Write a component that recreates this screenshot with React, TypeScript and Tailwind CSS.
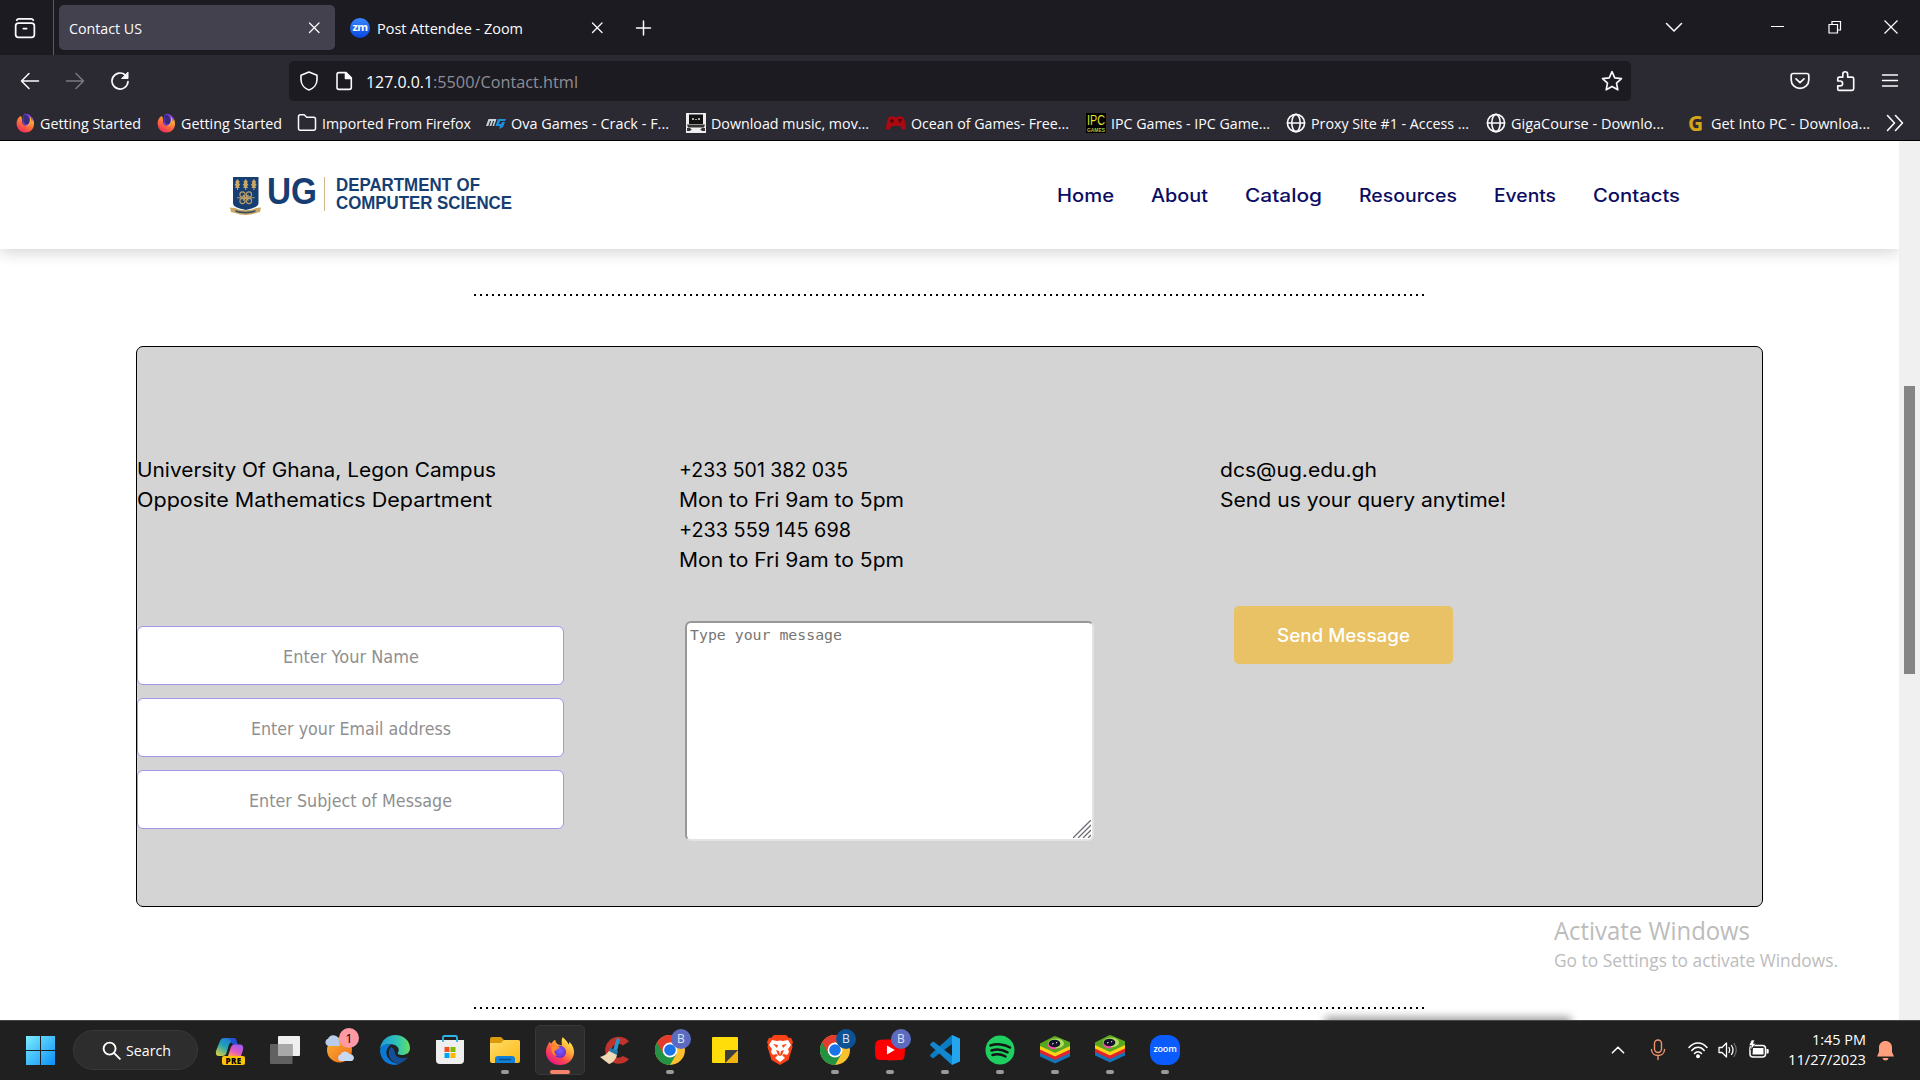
import React, { useLayoutEffect, useRef, useState } from "react";
import { FaYoutube } from "react-icons/fa";

const segoe = "font-['Open_Sans','Noto_Sans',sans-serif]";
const poppins = "font-['Inter','Open_Sans',sans-serif]";

/** A single line of text whose glyphs are condensed or widened so that it spans `w` pixels. */
function Line({ w, className = "", children }: { w: number; className?: string; children: string }) {
  const ref = useRef<HTMLSpanElement>(null);
  const [scale, setScale] = useState(1);
  useLayoutEffect(() => {
    if (ref.current) setScale(w / ref.current.getBoundingClientRect().width);
  }, []);
  return (
    <span className={"block shrink-0 whitespace-pre " + className} style={{ width: w }}>
      <span ref={ref} className="block w-fit origin-left" style={{ transform: `scaleX(${scale})` }}>
        {children}
      </span>
    </span>
  );
}

function Stroke({ size, children, className = "", sw = 1.5 }: { size: number; children: React.ReactNode; className?: string; sw?: number }) {
  return (
    <svg width={size} height={size} viewBox="0 0 20 20" fill="none" stroke="currentColor" strokeWidth={sw} strokeLinecap="round" strokeLinejoin="round" className={"shrink-0 " + className}>
      {children}
    </svg>
  );
}

const CloseX = () => (
  <Stroke size={20} sw={1.3}>
    <path d="M5.500 5l9.500 9.500M15 5L5.500 14.500" />
  </Stroke>
);

const Globe = () => (
  <Stroke size={20} sw={1.6}>
    <circle cx="10" cy="10" r="8.6" />
    <ellipse cx="10" cy="10" rx="4.2" ry="8.6" />
    <path d="M1.5 10h17" />
  </Stroke>
);

function FirefoxLogo({ size }: { size: number }) {
  return (
    <svg width={size} height={size} viewBox="0 0 32 32" className="shrink-0">
      <defs>
        <linearGradient id="ffBody" x1="0.85" y1="0.1" x2="0.2" y2="0.95">
          <stop offset="0" stopColor="#fff44f" />
          <stop offset="0.35" stopColor="#ffa436" />
          <stop offset="0.65" stopColor="#ff4a4d" />
          <stop offset="1" stopColor="#e31587" />
        </linearGradient>
        <radialGradient id="ffCore" cx="0.5" cy="0.4" r="0.6">
          <stop offset="0" stopColor="#7a5cff" />
          <stop offset="1" stopColor="#6a2bc9" />
        </radialGradient>
      </defs>
      <path d="M19 1c2 3 5 4 6 8 1-1 1-2 1-3 3 3 5 7 5 11 0 8-7 14-15 14S1 25 1 17c0-4 1-6 3-9V6l3 2c1-2 2-3 4-4 0 2 1 4 3 5l4 1c0-3-1-6 1-9z" fill="url(#ffBody)" />
      <circle cx="16" cy="17" r="6.5" fill="url(#ffCore)" />
      <path d="M7 12c4-3 8-1 9 1-3 0-3 2-6 3 0 2 1 4 3 5-5 0-7-5-6-9z" fill="#ff8a2a" />
    </svg>
  );
}

const FirefoxMini = () => (
  <svg width="19" height="20" viewBox="0 0 19 20" className="shrink-0">
    <defs>
      <linearGradient id="fm" x1="0.8" y1="0" x2="0.2" y2="1">
        <stop offset="0" stopColor="#ffd23f" />
        <stop offset="0.5" stopColor="#ff7139" />
        <stop offset="1" stopColor="#f0245e" />
      </linearGradient>
    </defs>
    <path d="M5 3C1 5 0 9 1 13c1 4 4 6.500 8.500 6.500S18 16 18 11c0-3-1-6-3-7 1 3 0 7-2 8-3 2-7 0-7-4 0-2 0-3-1-5z" fill="url(#fm)" />
    <path d="M8 1c5-1 9 3 9 7-1-1-1-1-1.500-3C16 9 14 13 10.500 13 7 13 5 9 8 1z" fill="#7b3fe0" />
    <path d="M8 1.500c3 0 5 2 5.500 5 .4 3-1 5-3 5C8 11.500 6.500 8 8 1.500z" fill="#3a2c7a" />
    <path d="M13.500 3c2 2 2.500 5 1.500 7-1.500 3-4 3.500-6 3 4-.5 6-4.500 4.500-10z" fill="#ffb238" />
  </svg>
);

type Bookmark = { icon: React.ReactNode; text: string; w: number; cell: string };

const bookmarks: Bookmark[] = [
  { icon: <FirefoxMini />, text: "Getting Started", w: 101, cell: "w-[141px]" },
  { icon: <FirefoxMini />, text: "Getting Started", w: 101, cell: "w-[141px]" },
  {
    icon: (
      <Stroke size={20}>
        <path d="M1.500 15.500v-12q0-1.700 1.700-1.700h4l2.500 2.500h7q1.800 0 1.800 1.800v9.400q0 1.700-1.800 1.700H3.200q-1.700 0-1.700-1.700z" />
      </Stroke>
    ),
    text: "Imported From Firefox",
    w: 149,
    cell: "w-[189px]",
  },
  {
    icon: (
      <svg width="20" height="20" viewBox="0 0 20 20" className="shrink-0">
        <path d="M2.500 6h8l-2.500 7H6.500l1.700-5H7l-1.700 5H3.500l1.700-5H4L2.300 13H0z" fill="#c9d3da" />
        <path d="M12 6h8l-1 2h-5l-1 3h2l1-2h3l-2 5-4 2 1-3H9.500z" fill="#1f8fdd" />
      </svg>
    ),
    text: "Ova Games - Crack - F...",
    w: 158,
    cell: "w-[200px]",
  },
  {
    icon: (
      <svg width="20" height="20" viewBox="0 0 20 20" className="shrink-0">
        <path d="M0 0h20v20H0z" fill="#eee" />
        <path d="M3 1.500h14V11H3z" fill="#111" />
        <path d="M6 5h2v2H6zM9 6h2v1H9zM12 5h2v2h-2z" fill="#aaa" />
        <path d="M1 11.500h18l-1 3H2zM1 15h3l2 2h8l2-2h3v3h-3l-1-1H5l-1 1H1z" fill="#333" />
      </svg>
    ),
    text: "Download music, mov...",
    w: 158,
    cell: "w-[200px]",
  },
  {
    icon: (
      <svg width="20" height="20" viewBox="0 0 20 20" className="shrink-0">
        <path d="M3 4l4-1 1 1h4l1-1 4 1c2 3 3 8 3 12l-3 1-3-4H6l-3 4-3-1C0 12 1 7 3 4z" fill="#a90911" />
        <path d="M4 8h4M6 6v4M12 7h4M14 6v4" stroke="#4d0508" strokeWidth="1.3" />
      </svg>
    ),
    text: "Ocean of Games- Free...",
    w: 158,
    cell: "w-[200px]",
  },
  {
    icon: (
      <span className="flex h-5 w-5 shrink-0 flex-col items-center bg-black font-['Liberation_Sans',sans-serif] text-[#e2e02c]">
        <Line w={18} className="text-[15px] leading-[14px]">IPC</Line>
        <Line w={18} className="text-[6px] leading-[6px] font-bold text-[#b4c53a]">GAMES</Line>
      </span>
    ),
    text: "IPC Games - IPC Game...",
    w: 159,
    cell: "w-[200px]",
  },
  { icon: <Globe />, text: "Proxy Site #1 - Access ...", w: 158, cell: "w-[200px]" },
  { icon: <Globe />, text: "GigaCourse - Downlo...", w: 153, cell: "w-[200px]" },
  {
    icon: <span className="w-5 shrink-0 pr-px text-center font-['Open_Sans',sans-serif] text-[21px] leading-5 font-bold text-[#d6a419]">G</span>,
    text: "Get Into PC - Downloa...",
    w: 159,
    cell: "w-[199px]",
  },
];

function TabStrip() {
  return (
    <div className="flex h-[55px] items-center bg-[#1c1b22]">
      <div className="flex h-full w-[54px] items-center border-r border-[#5b5a63] pl-[14px]">
        <Stroke size={22} sw={1.6}>
          <rect x="1.500" y="5.500" width="17" height="13" rx="2.500" />
          <path d="M2.500 2.800q.5-1.200 1.800-1.200h11.400q1.300 0 1.800 1.200M8.500 10.500h3" />
        </Stroke>
      </div>
      <div className="ml-[5px] flex h-[45px] w-[276px] items-center justify-between rounded-[5px] bg-[#42414d] pr-[11px] pl-[10px]">
        <Line w={73} className="pt-px text-[15px]">Contact US</Line>
        <CloseX />
      </div>
      <div className="ml-[15px] flex w-[257px] items-center">
        <span className="flex h-5 w-5 items-center justify-center rounded-full bg-gradient-to-b from-[#3a86ff] to-[#0b46e0] text-[11px] leading-none font-bold tracking-[-0.5px]">
          <span className="-mt-[2px]">zm</span>
        </span>
        <Line w={146} className="ml-[7px] pt-px text-[15px]">Post Attendee - Zoom</Line>
        <span className="ml-auto">
          <CloseX />
        </span>
      </div>
      <Stroke size={20} className="ml-[26px]" sw={1.5}>
        <path d="M10.500 3v14M3.500 10h14" />
      </Stroke>
      <Stroke size={20} className="-mt-[2px] ml-auto" sw={1.5}>
        <path d="M2.500 6.500L10 14l7.500-7.500" />
      </Stroke>
      <svg width="14" height="14" className="-mt-px ml-[87px]">
        <path d="M0 6.500h13" stroke="white" />
      </svg>
      <svg width="14" height="14" viewBox="0 0 14 14" className="-mt-px ml-[43px]" fill="none" stroke="white" strokeWidth="1.200">
        <path d="M1 4.500h8.500v8.500H1zM4 4.500V1.500h8.500V10h-3" />
      </svg>
      <svg width="16" height="16" className="-mt-px mr-[21px] ml-[41px]" stroke="white" strokeWidth="1.200">
        <path d="M1.500 1.500l13 13M14.500 1.500l-13 13" />
      </svg>
    </div>
  );
}

function NavBar() {
  return (
    <div className="flex h-[51px] items-center">
      <Stroke size={20} className="ml-5">
        <path d="M18.500 10H1.500M9 2.500L1.500 10 9 17.500" />
      </Stroke>
      <Stroke size={20} className="ml-[25px] text-[#7a7982]">
        <path d="M1.500 10h17M11 2.500l7.500 7.500-7.500 7.500" />
      </Stroke>
      <Stroke size={20} className="ml-[25px]" sw={1.7}>
        <path d="M15.500 4.200A8 8 0 1 0 18 10.500" />
        <path d="M18 1.500v6h-6z" fill="currentColor" strokeWidth="1" />
      </Stroke>
      <div className="ml-[159px] flex h-10 w-[1342px] items-center rounded-[5px] bg-[#1c1b22]">
        <Stroke size={20} className="ml-[10px]" sw={1.6}>
          <path d="M10 1l8 3.200v4.300c0 5-3.500 9-8 10.500-4.500-1.500-8-5.500-8-10.500V4.200z" />
        </Stroke>
        <Stroke size={20} className="ml-[15px]" sw={1.6}>
          <path d="M3 3.500q0-1.900 1.900-1.900H12l5.300 5.300v9.600q0 1.900-1.900 1.900H4.900q-1.900 0-1.900-1.900z" />
          <path d="M11.500 2v5.500H17z" fill="currentColor" />
        </Stroke>
        <span className="ml-[12px] flex pt-[3px] text-[17px] text-[#8f8e96]">
          <Line w={67} className="text-[#fbfbfe]">127.0.0.1</Line>
          <Line w={145}>:5500/Contact.html</Line>
        </span>
        <Stroke size={22} className="mr-2 ml-auto" sw={1.5}>
          <path d="M10 1.500l2.500 5.600 6.100.7-4.500 4.100 1.200 6.100L10 15l-5.300 3 1.200-6.100L1.400 7.800l6.100-.7z" />
        </Stroke>
      </div>
      <Stroke size={20} className="ml-[159px]" sw={1.7}>
        <path d="M3.200 2.500h13.600q2 0 2 2V9a8.800 8.300 0 0 1-17.600 0V4.500q0-2 2-2zM6 7.800l4 3.900 4-3.900" />
      </Stroke>
      <Stroke size={22} className="ml-[25px]" sw={1.5}>
        <path d="M3.800 18.500h11.700q1.500 0 1.500-1.500V8q0-1.500-1.500-1.500h-4V3.800a2.200 2.200 0 0 0-4.400 0v2.700H4Q2.500 6.500 2.500 8v2h2.200a2.200 2.200 0 0 1 0 4.400H2.500v2.800q0 1.300 1.300 1.300z" />
      </Stroke>
      <Stroke size={20} className="ml-[23px]" sw={1.4}>
        <path d="M2.500 4h15M2.500 9.500h15M2.500 15h15" />
      </Stroke>
    </div>
  );
}

function BookmarkBar() {
  return (
    <div className="flex h-[34px] items-center pl-[15px] text-[14.5px]">
      {bookmarks.map((b, i) => (
        <div key={i} className={"flex shrink-0 items-center gap-[5px] " + b.cell}>
          <span className="flex w-5 shrink-0 justify-center">{b.icon}</span>
          <Line w={b.w} className="pt-[2px]">{b.text}</Line>
        </div>
      ))}
      <Stroke size={20} sw={1.6}>
        <path d="M2.500 2.500L9.500 10l-7 7.500M10.500 2.500l7 7.500-7 7.500" />
      </Stroke>
    </div>
  );
}

function Logo() {
  return (
    <div className="flex items-start">
      <svg width="31" height="38" viewBox="0 0 31 38" className="mt-px">
        <path d="M3 0h25.500v26c0 4-5 5-12.700 7C8 31 3 30 3 26z" fill="#163e72" />
        <g fill="#c9a866">
          <path d="M7.500 2l2.300 3-1 1 1.500 2-1.500 1 1 2H8v2H7v-2H5l1-2-1.500-1L6 6 5.200 5zM15.700 2L18 5l-1 1 1.500 2-1.500 1 1 2h-1.800v2h-1v-2h-2l1-2-1.500-1 1.500-2-.8-1zM23.900 2l2.300 3-1 1 1.500 2-1.500 1 1 2h-1.800v2h-1v-2h-2l1-2-1.500-1 1.500-2-.8-1z" />
        </g>
        <g fill="none" stroke="#b9a06a" strokeWidth="1.100">
          <circle cx="12.500" cy="17.500" r="2.600" />
          <circle cx="19" cy="17.500" r="2.600" />
          <circle cx="12.500" cy="24" r="2.600" />
          <circle cx="19" cy="24" r="2.600" />
          <path d="M7 20.800h17.500M13 18l5.500 5.500M18.500 18L13 23.500" />
        </g>
        <path d="M0 30.500l5 .5c6 3 15 3 21 0l5-.5-1 4.500-4 1c-6 2.600-15 2.600-21 0l-4-1z" fill="#c9a866" />
        <path d="M5.500 33c6 2.300 14 2.300 20 0v1.800c-6 2.300-14 2.300-20 0z" fill="#3a4d63" />
      </svg>
      <Line w={50} className="ml-[6px] pt-[3px] font-['Liberation_Sans',sans-serif] text-[36px] leading-[26px] font-bold text-[#163e72]">UG</Line>
      <span className="mt-px ml-[7px] h-[34px] w-px bg-[#cdb88a]" />
      <div className="ml-[11px] flex flex-col font-['Liberation_Sans',sans-serif] text-[19px] leading-[18px] font-bold text-[#163e72]">
        <Line w={144}>DEPARTMENT OF</Line>
        <Line w={176}>COMPUTER SCIENCE</Line>
      </div>
    </div>
  );
}

function SiteHeader() {
  return (
    <header className="relative flex h-[108px] shrink-0 justify-between bg-white pr-[219px] pl-[230px] shadow-[0_4px_14px_rgba(0,0,0,0.16)]">
      <div className="pt-[35px]">
        <Logo />
      </div>
      <nav className={"flex gap-[37px] pt-[41px] text-[18px] leading-[28px] font-medium text-[#0c0c63] " + poppins}>
        <Line w={57}>Home</Line>
        <Line w={57}>About</Line>
        <Line w={77}>Catalog</Line>
        <Line w={98}>Resources</Line>
        <Line w={62}>Events</Line>
        <Line w={87}>Contacts</Line>
      </nav>
    </header>
  );
}

const Dots = () => (
  <div className="h-[2px] w-[952px] shrink-0 bg-[repeating-linear-gradient(90deg,#000_0,#000_2px,transparent_2px,transparent_6px)]" />
);

function Field({ text, w }: { text: string; w: number }) {
  return (
    <div className="flex h-[59px] w-[427px] items-center justify-center rounded-[6px] border border-[#a495ec] bg-white pt-[3px] font-['DejaVu_Sans','Noto_Sans',sans-serif] text-[17px] text-[#8f8f8f]">
      <Line w={w}>{text}</Line>
    </div>
  );
}

function ContactCard() {
  return (
    <section className={"grid h-[561px] w-[1627px] shrink-0 grid-cols-[542px_541px_1fr] rounded-[7px] border border-black bg-[#d4d4d4] text-[19.5px] leading-[30px] text-black " + poppins}>
      <div className="flex flex-col pt-[108px]">
        <Line w={359}>University Of Ghana, Legon Campus</Line>
        <Line w={355}>Opposite Mathematics Department</Line>
        <div className="mt-[111px] flex flex-col gap-[13px]">
          <Field text="Enter Your Name" w={136} />
          <Field text="Enter your Email address" w={200} />
          <Field text="Enter Subject of Message" w={203} />
        </div>
      </div>
      <div className="flex flex-col pt-[108px]">
        <Line w={169}>+233 501 382 035</Line>
        <Line w={225}>Mon to Fri 9am to 5pm</Line>
        <Line w={172}>+233 559 145 698</Line>
        <Line w={225}>Mon to Fri 9am to 5pm</Line>
        <div className="mt-[46px] ml-[6px] flex h-[220px] w-[409px] flex-col justify-between rounded-[6px] border-2 border-t-[#979797] border-r-[#e3e3e3] border-b-[#e3e3e3] border-l-[#979797] bg-white">
          <Line w={152} className="ml-[3px] pt-[4px] font-['DejaVu_Sans_Mono',monospace] text-[13.3px] leading-[18px] text-[#757575]">
            Type your message
          </Line>
          <svg width="18" height="18" className="mr-px mb-px self-end" stroke="#6b6b76" strokeWidth="1.300">
            <path d="M0 18L18 0M5 18L18 5M10 18l8-8M15 18l3-3" />
          </svg>
        </div>
      </div>
      <div className="flex flex-col pt-[108px]">
        <Line w={157}>dcs@ug.edu.gh</Line>
        <Line w={286}>Send us your query anytime!</Line>
        <div className="mt-[91px] ml-[14px] flex h-[58px] w-[219px] items-center justify-center rounded-[5px] bg-[#e8c264] pt-[2px] text-[18px] font-medium text-white">
          <Line w={133}>Send Message</Line>
        </div>
      </div>
    </section>
  );
}

function ChromeLogo() {
  return (
    <svg width="30" height="30" viewBox="0 0 30 30">
      <circle cx="15" cy="15" r="15" fill="#fbc02d" />
      <path d="M2 7.500A15 15 0 0 0 15 30l6.500-11.300L15 15z" fill="#229342" />
      <path d="M2 7.500A15 15 0 0 1 28 7.500H15L8.500 18.700z" fill="#e33b2e" />
      <circle cx="15" cy="15" r="7.400" fill="#fff" />
      <circle cx="15" cy="15" r="5.800" fill="#1a73e8" />
    </svg>
  );
}

function BlueStacks() {
  return (
    <svg width="30" height="30" viewBox="0 0 30 30">
      <path d="M0 17l15-4 15 4v4.500L16 28q-1 .5-2 0L0 21.500z" fill="#1573b8" />
      <path d="M0 14l15-4 15 4v4l-14 6.500q-1 .5-2 0L0 18z" fill="#e3222a" />
      <path d="M0 10l15-4 15 4v4.500L16 21q-1 .5-2 0L0 14.500z" fill="#fbd318" />
      <path d="M0 8.500L14 1.300q1-.5 2 0l14 6v3.700l-14 6.500q-1 .5-2 0L0 11z" fill="#57a81f" />
      <ellipse cx="16" cy="8.500" rx="8" ry="5" fill="#b4dd5f" />
      <path d="M7.500 9c0 4 5 6 9 5l-2-4z" fill="#ff4fa8" />
      <ellipse cx="14.500" cy="8.500" rx="5.800" ry="3.800" fill="#12132b" />
      <path d="M12 9l1.500-.5M16 8l1.200-.6" stroke="#fff" strokeWidth="1" />
    </svg>
  );
}

function Badge({ color }: { color: string }) {
  return (
    <span className={"absolute -top-[6px] -right-[6px] flex h-5 w-5 items-center justify-center rounded-full text-[12px] leading-none text-[#dfe3f5] " + color}>B</span>
  );
}

type Task = { icon: React.ReactNode; run?: boolean; active?: boolean };

const tasks: Task[] = [
  {
    icon: (
      <span className="relative block h-[30px] w-[30px]">
        <svg width="30" height="30" viewBox="0 0 30 30">
          <defs>
            <linearGradient id="cpA" x1="0.8" y1="0" x2="0.1" y2="1">
              <stop offset="0" stopColor="#1f6fe0" />
              <stop offset="0.5" stopColor="#21a3b5" />
              <stop offset="1" stopColor="#e0d23c" />
            </linearGradient>
            <linearGradient id="cpB" x1="0.8" y1="0" x2="0.2" y2="1">
              <stop offset="0" stopColor="#9b5cf6" />
              <stop offset="0.6" stopColor="#e25ac0" />
              <stop offset="1" stopColor="#ff9a5c" />
            </linearGradient>
          </defs>
          <path d="M9 3h9q3 0 3.500 3l-4 1q-3 0-4 4l-2 7q-1 3-4 3H4q-4 0-3-5L5 6q1-3 4-3z" fill="url(#cpA)" />
          <path d="M12 3h6q3 0 3.500 3L23 10h-3q-4-1-4-4-1-3-4-3z" fill="#2450d8" />
          <path d="M19 9.500h6q4 0 3 5.500l-2 6H13l3-9q1-2.500 3-2.500z" fill="url(#cpB)" />
        </svg>
        <span className="absolute top-[21px] left-[7px] flex h-[9px] w-[23px] items-center justify-center rounded-[2px] bg-[#fcc50a] text-[8px] leading-none font-extrabold tracking-[0.3px] text-black">PRE</span>
      </span>
    ),
  },
  {
    icon: (
      <svg width="30" height="30" viewBox="0 0 30 30">
        <rect x="8" y="1" width="22" height="20" rx="1" fill="#efefef" />
        <rect x="0" y="9" width="22.500" height="20" rx="1" fill="#6d6d6d" opacity="0.85" />
        <rect x="8" y="9" width="14.500" height="12" fill="#a9a9a9" />
      </svg>
    ),
  },
  {
    icon: (
      <span className="relative block h-[30px] w-[30px]">
        <svg width="30" height="30" viewBox="0 0 30 30">
          <defs>
            <linearGradient id="sun" x1="0" y1="0" x2="1" y2="1">
              <stop offset="0" stopColor="#f9b233" />
              <stop offset="1" stopColor="#ee6c1a" />
            </linearGradient>
          </defs>
          <circle cx="14.500" cy="15" r="12.500" fill="url(#sun)" />
          <path d="M3.500 11a3.800 3.800 0 0 1-.5-7.300 6 6 0 0 1 10.500-.7l1.500 8z" fill="#b9cdea" />
          <path d="M15 26a3.500 3.500 0 0 1 .5-6.500 5 5 0 0 1 9-.5c4.500 0 6 5 2.500 7z" fill="#c7d8f2" />
        </svg>
        <span className="absolute -top-[7px] left-[14px] flex h-5 w-5 items-center justify-center rounded-full bg-[#ff99a4] text-[13px] leading-none text-black">1</span>
      </span>
    ),
  },
  {
    icon: (
      <svg width="30" height="30" viewBox="0 0 30 30">
        <defs>
          <linearGradient id="edA" x1="0" y1="0.3" x2="1" y2="0.3">
            <stop offset="0" stopColor="#1f9ad6" />
            <stop offset="0.6" stopColor="#30c5b4" />
            <stop offset="1" stopColor="#67de5d" />
          </linearGradient>
        </defs>
        <path d="M0 14C1 5 8 0 15 0c9 0 15 6 15 13 0 5-4 7-8 7-3 0-5-1-4-2.500 2-3 0-7-5-8-6-1-11 1-13 4.500z" fill="url(#edA)" />
        <path d="M0 15C1 10 7 8.500 11 9.500c-6 4-6 11-1 15.500 3 3 8 4 11 3.500C10 33 0 26 0 15z" fill="#0a78d4" />
        <path d="M11 12c-4 4-3 13 5 16 5 1 9-2 12-6-5 2.500-12 1-13-4-1-3 0-4-4-6z" fill="#144e96" />
      </svg>
    ),
  },
  {
    icon: (
      <svg width="30" height="30" viewBox="0 0 30 30">
        <path d="M8 8V2.500Q8 1 9.500 1h11Q22 1 22 2.500V8" fill="none" stroke="#2fb4ea" strokeWidth="1.800" />
        <path d="M1 5h28v20q0 4-4 4H5q-4 0-4-4z" fill="#efefef" />
        <path d="M9.500 12h5v5h-5z" fill="#f25022" />
        <path d="M15.500 12h5v5h-5z" fill="#7fba00" />
        <path d="M9.500 18h5v5h-5z" fill="#00a4ef" />
        <path d="M15.500 18h5v5h-5z" fill="#ffb900" />
        <path d="M8 5v2M22 5v2" stroke="#2fb4ea" strokeWidth="1.800" />
      </svg>
    ),
  },
  {
    run: true,
    icon: (
      <svg width="30" height="30" viewBox="0 0 30 30">
        <defs>
          <linearGradient id="fold" x1="0" y1="0" x2="1" y2="1">
            <stop offset="0" stopColor="#ffdc6b" />
            <stop offset="1" stopColor="#fdb913" />
          </linearGradient>
        </defs>
        <path d="M0 4q0-2 2-2h9l3 3h14q2 0 2 2v3H0z" fill="#d99a0c" />
        <path d="M0 8h11l3-3h14q2 0 2 2v19q0 2-2 2H2q-2 0-2-2z" fill="url(#fold)" />
        <path d="M5 28v-4q0-3 3-3h14q3 0 3 3v4z" fill="#1180d6" />
        <path d="M9 24.500h12" stroke="#0a4f8c" strokeWidth="1.500" />
      </svg>
    ),
  },
  { active: true, icon: <FirefoxLogo size={30} /> },
  {
    icon: (
      <svg width="30" height="30" viewBox="0 0 30 30">
        <path d="M29 6.500l-6 4A7 7 0 1 0 23 21l6 3A13.500 13.500 0 1 1 29 6.500z" fill="#c0322c" />
        <path d="M17 3l3 1-3 12-4-1z" fill="#2a93cf" />
        <path d="M10 13l8 3-1 4-8-3z" fill="#2378ad" />
        <path d="M9 16l8 4c-1 4-4 8-8 9L0 22c4-1 7-3 9-6z" fill="#f0d9b5" />
      </svg>
    ),
  },
  {
    run: true,
    icon: (
      <span className="relative block">
        <ChromeLogo />
        <Badge color="bg-[#5c6bc0]" />
      </span>
    ),
  },
  {
    icon: (
      <svg width="26" height="26" viewBox="0 0 26 26">
        <path d="M1 0h24q1 0 1 1v12L13 26H1q-1 0-1-1V1q0-1 1-1z" fill="#ffdd0a" />
        <path d="M26 13v12q0 1-1 1H13z" fill="#f2b211" />
        <path d="M13 14q0-1 1-1h12L13 26z" fill="#3d3d3d" />
      </svg>
    ),
  },
  {
    icon: (
      <svg width="26" height="30" viewBox="0 0 26 30">
        <path d="M7 0h12l3 3 2-.3L26 7l-1 3 .5 2-4 13-8.500 5-8.500-5-4-13L1 10 0 7l2-4.300L4 3z" fill="#fb4318" />
        <path d="M5 5l5 1 3-.5 3 .5 5-1 3 5-3 4 1 3-2 3-3-1-2 1 3 3-5 4-5-4 3-3-2-1-3 1-2-3 1-3-3-4z" fill="#fff" />
        <path d="M6 9l5 1-1 3zM20 9l-5 1 1 3zM9 15l3 1 1 4 1-4 3-1-2 5-2 1-2-1z" fill="#fb4318" />
      </svg>
    ),
  },
  {
    run: true,
    icon: (
      <span className="relative block">
        <ChromeLogo />
        <Badge color="bg-[#0b5394]" />
      </span>
    ),
  },
  {
    run: true,
    icon: (
      <span className="relative flex h-[30px] w-[30px] items-center justify-center">
        <span className="h-3 w-3 bg-white" />
        <FaYoutube className="absolute -left-px h-[28px] w-8 text-[#ff0000]" />
        <Badge color="bg-[#5c6bc0]" />
      </span>
    ),
  },
  {
    run: true,
    icon: (
      <svg width="30" height="30" viewBox="0 0 30 30">
        <path d="M22 0L1 19l-1 2 3 2.500L22 9z" fill="#0b7bc4" />
        <path d="M22 30L0 10l1-2 2.500-1.500L22 21z" fill="#1287d0" />
        <path d="M22 0l8 3.500v23L22 30z" fill="#26a5ef" />
      </svg>
    ),
  },
  {
    run: true,
    icon: (
      <svg width="30" height="30" viewBox="0 0 30 30">
        <circle cx="15" cy="15" r="14.500" fill="#1ed05f" />
        <path d="M5.500 10.500c6-2 14-1.500 19.500 2M6.500 15.500c5-1.500 11-1 16 1.800M7.500 20c4-1.200 9-.8 13 1.500" fill="none" stroke="#151515" strokeWidth="2.500" strokeLinecap="round" />
      </svg>
    ),
  },
  { run: true, icon: <BlueStacks /> },
  {
    run: true,
    icon: (
      <span className="-mt-[3px] block">
        <BlueStacks />
      </span>
    ),
  },
  {
    run: true,
    icon: <span className="flex h-[30px] w-[30px] items-center justify-center rounded-[12px] bg-[#0b5cff] pb-[3px] text-[9px] leading-none font-semibold tracking-[-0.2px] text-white">zoom</span>,
  },
];

function TaskBar() {
  return (
    <footer className="flex h-[60px] items-center border-t border-[#474747] bg-[#202020] pb-px text-white">
      <svg width="29" height="29" viewBox="0 0 29 29" className="ml-[26px]">
        <defs>
          <linearGradient id="win" gradientUnits="userSpaceOnUse" x1="0" y1="0" x2="29" y2="29">
            <stop offset="0" stopColor="#7bedff" />
            <stop offset="1" stopColor="#0b8ff7" />
          </linearGradient>
        </defs>
        <path d="M0 0h14v14H0zM15 0h14v14H15zM0 15h14v14H0zM15 15h14v14H15z" fill="url(#win)" />
      </svg>
      <div className="ml-[18px] flex h-10 w-[125px] items-center rounded-full border border-[#383838] bg-[#2d2d2d]">
        <Stroke size={19} sw={2} className="ml-7">
          <circle cx="8" cy="8" r="6.300" />
          <path d="M12.800 12.800l6 6" />
        </Stroke>
        <Line w={45} className="ml-[5px] pt-[2px] text-[14.5px]">Search</Line>
      </div>
      <div className="ml-[4.500px] flex">
        {tasks.map((t, i) => (
          <div key={i} className="flex h-[58px] w-[55px] items-center justify-center">
            <div className={"flex h-[50px] w-[50px] flex-col items-center rounded-[5px] pt-[10px] " + (t.active ? "border border-[#383838] bg-[#2c2c2c]" : "")}>
              <span className="flex h-[30px] items-center justify-center">{t.icon}</span>
              {t.active && <span className="mt-[4px] h-[4px] w-5 shrink-0 rounded-full bg-[#f6836a]" />}
              {t.run && <span className="mt-[5px] h-[4px] w-2 shrink-0 rounded-full bg-[#9a9a9a]" />}
            </div>
          </div>
        ))}
      </div>
      <Stroke size={16} className="ml-auto" sw={2}>
        <path d="M3 13.500L10 6.500l7 7" />
      </Stroke>
      <svg width="18" height="22" viewBox="0 0 18 22" className="ml-[23px]" fill="none" stroke="#ef9470" strokeWidth="1.400" strokeLinecap="round">
        <rect x="5.500" y="1" width="7" height="12.500" rx="3.500" />
        <path d="M2.500 10.500c0 8 13 8 13 0M9 16.500v4" />
      </svg>
      <svg width="20" height="18" viewBox="0 0 20 18" className="ml-[21px]" fill="none" stroke="white" strokeWidth="1.500" strokeLinecap="round">
        <path d="M1 6.500c5-6 13-6 18 0M3.800 9.500c3.500-4.200 9-4.200 12.400 0M6.500 12.500c2-2.500 5-2.500 7 0" />
        <circle cx="10" cy="15.300" r="1.200" fill="white" />
      </svg>
      <svg width="20" height="18" viewBox="0 0 20 18" className="ml-[10px]" fill="none" stroke="white" strokeWidth="1.300" strokeLinecap="round" strokeLinejoin="round">
        <path d="M1 6.500h3L8.500 2v14L4 11.500H1zM11 6.500q1.500 2.500 0 5M13.500 4.500q3 4.500 0 9" />
        <path d="M16 2.500q4.500 6.500 0 13" stroke="#6b6b6b" />
      </svg>
      <svg width="21" height="20" viewBox="0 0 21 20" className="ml-[10px]">
        <rect x="2" y="5.500" width="15.500" height="11.500" rx="3" fill="none" stroke="white" strokeWidth="1.500" />
        <path d="M5 8h10.500v6.500H4.500zM18.500 9h1.200q1 0 1 1v2.500q0 1-1 1h-1.200z" fill="white" />
        <path d="M3.500 0h3L5.500 3.500H8L2.500 10l1-4.500H1z" fill="white" stroke="#202020" strokeWidth="0.600" />
      </svg>
      <div className="ml-[19px] flex flex-col items-end text-[14px] leading-5">
        <Line w={54}>1:45 PM</Line>
        <Line w={78}>11/27/2023</Line>
      </div>
      <svg width="17" height="20" viewBox="0 0 17 20" className="mt-px mr-[26px] ml-[11px]" fill="#ff9f7d">
        <path d="M8.500 0C12 0 15 2.500 15 6.500V11l2 4.500H0L2 11V6.500C2 2.500 5 0 8.500 0zM5.500 17h6q-.5 2.500-3 2.500t-3-2.500z" />
      </svg>
    </footer>
  );
}

export default function App() {
  return (
    <div className={"flex h-[1080px] w-[1920px] flex-col overflow-hidden bg-white text-[#fbfbfe] " + segoe}>
      <TabStrip />
      <div className="h-[86px] border-b border-black bg-[#2b2a33]">
        <NavBar />
        <BookmarkBar />
      </div>
      <div className="flex h-[879px]">
        <main className="relative flex w-[1899px] flex-col overflow-hidden bg-white">
          <SiteHeader />
          <div className="mt-[45px] flex flex-col pl-[136px]">
            <div className="pl-[338px]">
              <Dots />
            </div>
            <div className="mt-[50px]">
              <ContactCard />
            </div>
            <div className="mt-[100px] pl-[338px]">
              <Dots />
            </div>
          </div>
          <div className="absolute top-[773px] left-[1554px] flex flex-col text-[#bcbcbc]">
            <Line w={196} className="text-[25px] leading-[32px]">Activate Windows</Line>
            <Line w={284} className="pt-px text-[17.5px] leading-[26px]">Go to Settings to activate Windows.</Line>
          </div>
          <div className="absolute top-[879px] left-[1328px] h-2 w-[240px] shadow-[0_0_9px_3px_rgba(0,0,0,0.4)]" />
        </main>
        <div className="w-[21px] bg-[#f0f0f0] pt-[245px] pl-[5px]">
          <div className="h-[288px] w-[11px] bg-[#858585]" />
        </div>
      </div>
      <TaskBar />
    </div>
  );
}
